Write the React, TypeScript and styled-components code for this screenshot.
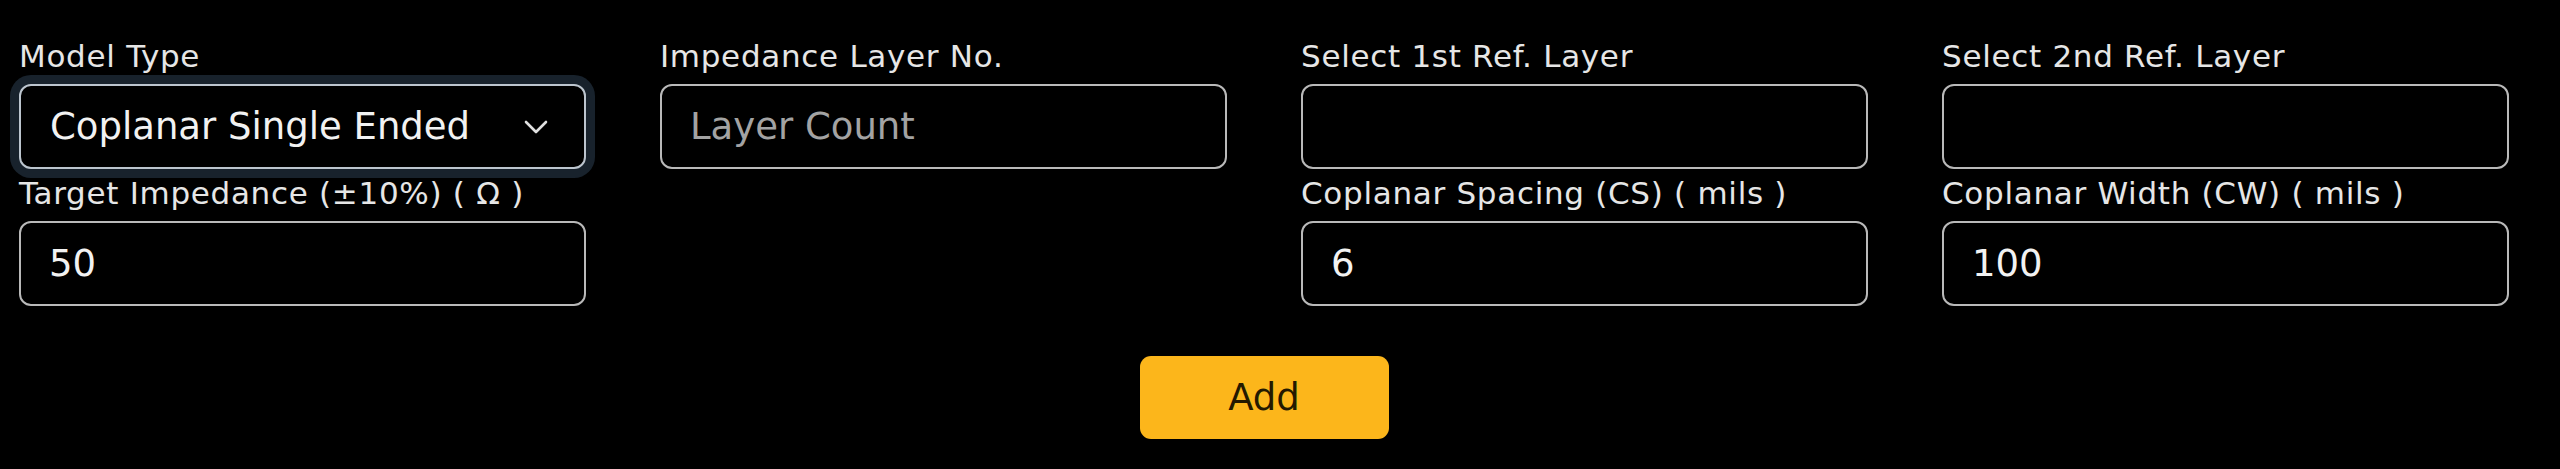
import styled, { createGlobalStyle } from "styled-components";

const GlobalStyle = createGlobalStyle`
  html, body {
    margin: 0;
    padding: 0;
    background: #000;
  }
  * {
    box-sizing: border-box;
  }
`;

const Page = styled.div`
  background: #000;
  min-height: 469px;
  padding: 38px 0 0 19px;
  font-family: "DejaVu Sans", "Open Sans", sans-serif;
`;

const Form = styled.div`
  width: 2490px;
`;

const Grid = styled.div`
  display: grid;
  grid-template-columns: repeat(4, 567px);
  column-gap: 74px;
  row-gap: 6px;
`;

const Field = styled.div`
  display: flex;
  flex-direction: column;
`;

const Label = styled.label`
  font-size: 31px;
  line-height: 37px;
  letter-spacing: 0.7px;
  color: #e6e6e6;
  margin-bottom: 9px;
  white-space: nowrap;
`;

const Input = styled.input`
  height: 85px;
  width: 100%;
  background: #000;
  border: 2px solid #b9b9b9;
  border-radius: 12px;
  padding: 0 28px;
  font-family: inherit;
  font-size: 37px;
  color: #f2f2f2;
  outline: none;

  &::placeholder {
    color: #a3a3a3;
  }
`;

const SelectBox = styled.div`
  height: 85px;
  width: 100%;
  display: flex;
  align-items: center;
  justify-content: space-between;
  background: #000;
  border: 2px solid #bcc5ce;
  border-radius: 12px;
  box-shadow: 0 0 0 9px #18222c;
  padding: 0 36px 0 29px;
  font-size: 37px;
  color: #f2f2f2;
`;

const Chevron = styled.svg`
  width: 24px;
  height: 14px;
  flex-shrink: 0;
`;

const Actions = styled.div`
  display: flex;
  justify-content: center;
  margin-top: 50px;
`;

const AddButton = styled.button`
  width: 249px;
  height: 83px;
  border: none;
  border-radius: 11px;
  background: #fcb61b;
  color: #241900;
  font-family: inherit;
  font-size: 37px;
  cursor: pointer;
`;

export default function App() {
  return (
    <Page>
      <GlobalStyle />
      <Form>
        <Grid>
          <Field>
            <Label>Model Type</Label>
            <SelectBox>
              <span>Coplanar Single Ended</span>
              <Chevron viewBox="0 0 24 14">
                <path
                  d="M2 2 L12 12 L22 2"
                  fill="none"
                  stroke="#e0e0e0"
                  strokeWidth="2.6"
                  strokeLinecap="round"
                  strokeLinejoin="round"
                />
              </Chevron>
            </SelectBox>
          </Field>
          <Field>
            <Label>Impedance Layer No.</Label>
            <Input placeholder="Layer Count" readOnly />
          </Field>
          <Field>
            <Label>Select 1st Ref. Layer</Label>
            <Input readOnly />
          </Field>
          <Field>
            <Label>Select 2nd Ref. Layer</Label>
            <Input readOnly />
          </Field>
          <Field>
            <Label>Target Impedance (±10%) ( Ω )</Label>
            <Input defaultValue="50" />
          </Field>
          <div />
          <Field>
            <Label>Coplanar Spacing (CS) ( mils )</Label>
            <Input defaultValue="6" />
          </Field>
          <Field>
            <Label>Coplanar Width (CW) ( mils )</Label>
            <Input defaultValue="100" />
          </Field>
        </Grid>
        <Actions>
          <AddButton>Add</AddButton>
        </Actions>
      </Form>
    </Page>
  );
}
